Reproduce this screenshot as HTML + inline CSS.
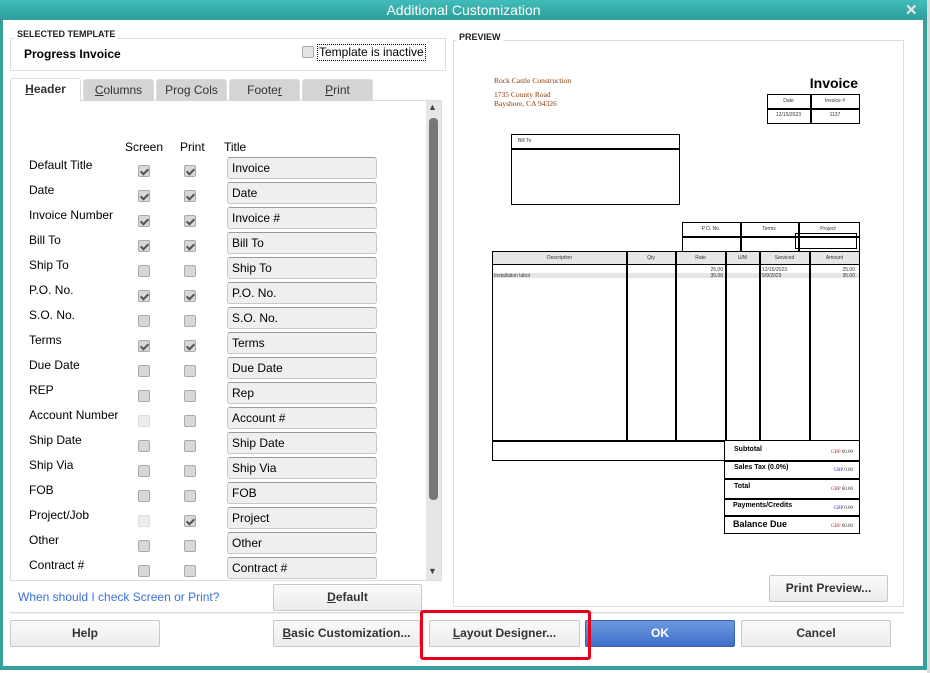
<!DOCTYPE html>
<html><head><meta charset="utf-8"><style>
*{box-sizing:border-box;margin:0;padding:0}
body{width:930px;height:673px;background:#fff;font-family:"Liberation Sans",Arial,sans-serif;font-size:12px;color:#000;position:relative;overflow:hidden}
.a{position:absolute}
.win{left:0;top:0;width:927px;height:670px;background:#399f9c;}
.title{left:0;top:0;width:927px;height:20px;background:linear-gradient(#41bcbb,#2e9e9b);color:#fff;font-size:14px;text-align:center;line-height:20px}
.client{left:3px;top:20px;width:920px;height:646px;background:#fff}
.lbl{font-size:12px;left:29px}
.cb{width:12px;height:12px;border:1px solid #aaa;border-radius:2px;background:#d8d8d8}
.cb.dis{background:#ececec;border-color:#ddd}
.cb.on::after{content:"";position:absolute;left:3px;top:1px;width:3px;height:6px;border:solid #555;border-width:0 2px 2px 0;transform:rotate(45deg)}
.fld{left:227px;width:150px;height:22px;border:1px solid #c8c8c8;border-top-color:#999;border-radius:3px;background:#efefef;padding-left:4px;line-height:20px;font-size:12px}
.btn{height:27px;border:1px solid #c8c8c8;border-radius:2px;background:linear-gradient(#fafafa,#ececec);text-align:center;line-height:25px;font-weight:bold;font-size:12px;color:#333}
.tab{top:79px;height:22px;background:#d4d4d4;border:1px solid #ddd;border-bottom:none;border-radius:3px 3px 0 0;text-align:center;line-height:21px;font-size:12px;color:#333}
.b{border:1.5px solid #000}
.s{font-size:5px;color:#333;text-align:center}
</style></head><body>
<div class="a" style="left:927px;top:0;width:3px;height:673px;background:#d8dcdc"></div>
<div class="a win"></div>
<div class="a title">Additional Customization</div>
<div class="a" style="left:905px;top:1px;color:#e8e8e8;font-size:15px;font-weight:bold">✕</div>
<div class="a client"></div>

<!-- selected template -->
<div class="a" style="left:10px;top:38px;width:436px;height:33px;border:1px solid #ddd"></div>
<div class="a" style="left:15px;top:29px;background:#fff;padding:0 2px;font-size:9px;font-weight:bold;color:#222">SELECTED TEMPLATE</div>
<div class="a" style="left:24px;top:47px;font-size:12px;font-weight:bold">Progress Invoice</div>
<div class="a cb" style="left:302px;top:46px;width:12px;height:12px;background:#e4e4e4"></div>
<div class="a" style="left:317px;top:44px;border:1px dotted #000;padding:0 1px;font-size:12px;line-height:15px">Template is inactive</div>

<!-- tabs -->
<div class="a" style="left:10px;top:100px;width:432px;height:481px;border:1px solid #ddd"></div>
<div class="a tab" style="left:10px;top:78px;width:71px;height:24px;background:#fff;font-weight:bold;"><u>H</u>eader</div>
<div class="a tab" style="left:83px;width:71px"><u>C</u>olumns</div>
<div class="a tab" style="left:156px;width:71px">Pro<u>g</u> Cols</div>
<div class="a tab" style="left:229px;width:71px">Foote<u>r</u></div>
<div class="a tab" style="left:302px;width:71px"><u>P</u>rint</div>
<div class="a" style="left:426px;top:101px;width:15px;height:479px;background:#e6e6e6"></div>
<div class="a" style="left:429px;top:118px;width:9px;height:382px;background:#777;border-radius:4px"></div>
<div class="a" style="left:428px;top:102px;font-size:9px;color:#444">▲</div>
<div class="a" style="left:428px;top:566px;font-size:9px;color:#444">▼</div>

<div class="a" style="left:125px;top:140px">Screen</div>
<div class="a" style="left:180px;top:140px">Print</div>
<div class="a" style="left:224px;top:140px">Title</div>

<div class="a lbl" style="top:158px">Default Title</div><div class="a cb on" style="left:138px;top:165px"></div><div class="a cb on" style="left:184px;top:165px"></div><div class="a fld" style="top:157px">Invoice</div>
<div class="a lbl" style="top:183px">Date</div><div class="a cb on" style="left:138px;top:190px"></div><div class="a cb on" style="left:184px;top:190px"></div><div class="a fld" style="top:182px">Date</div>
<div class="a lbl" style="top:208px">Invoice Number</div><div class="a cb on" style="left:138px;top:215px"></div><div class="a cb on" style="left:184px;top:215px"></div><div class="a fld" style="top:207px">Invoice #</div>
<div class="a lbl" style="top:233px">Bill To</div><div class="a cb on" style="left:138px;top:240px"></div><div class="a cb on" style="left:184px;top:240px"></div><div class="a fld" style="top:232px">Bill To</div>
<div class="a lbl" style="top:258px">Ship To</div><div class="a cb" style="left:138px;top:265px"></div><div class="a cb" style="left:184px;top:265px"></div><div class="a fld" style="top:257px">Ship To</div>
<div class="a lbl" style="top:283px">P.O. No.</div><div class="a cb on" style="left:138px;top:290px"></div><div class="a cb on" style="left:184px;top:290px"></div><div class="a fld" style="top:282px">P.O. No.</div>
<div class="a lbl" style="top:308px">S.O. No.</div><div class="a cb" style="left:138px;top:315px"></div><div class="a cb" style="left:184px;top:315px"></div><div class="a fld" style="top:307px">S.O. No.</div>
<div class="a lbl" style="top:333px">Terms</div><div class="a cb on" style="left:138px;top:340px"></div><div class="a cb on" style="left:184px;top:340px"></div><div class="a fld" style="top:332px">Terms</div>
<div class="a lbl" style="top:358px">Due Date</div><div class="a cb" style="left:138px;top:365px"></div><div class="a cb" style="left:184px;top:365px"></div><div class="a fld" style="top:357px">Due Date</div>
<div class="a lbl" style="top:383px">REP</div><div class="a cb" style="left:138px;top:390px"></div><div class="a cb" style="left:184px;top:390px"></div><div class="a fld" style="top:382px">Rep</div>
<div class="a lbl" style="top:408px">Account Number</div><div class="a cb dis" style="left:138px;top:415px"></div><div class="a cb" style="left:184px;top:415px"></div><div class="a fld" style="top:407px">Account #</div>
<div class="a lbl" style="top:433px">Ship Date</div><div class="a cb" style="left:138px;top:440px"></div><div class="a cb" style="left:184px;top:440px"></div><div class="a fld" style="top:432px">Ship Date</div>
<div class="a lbl" style="top:458px">Ship Via</div><div class="a cb" style="left:138px;top:465px"></div><div class="a cb" style="left:184px;top:465px"></div><div class="a fld" style="top:457px">Ship Via</div>
<div class="a lbl" style="top:483px">FOB</div><div class="a cb" style="left:138px;top:490px"></div><div class="a cb" style="left:184px;top:490px"></div><div class="a fld" style="top:482px">FOB</div>
<div class="a lbl" style="top:508px">Project/Job</div><div class="a cb dis" style="left:138px;top:515px"></div><div class="a cb on" style="left:184px;top:515px"></div><div class="a fld" style="top:507px">Project</div>
<div class="a lbl" style="top:533px">Other</div><div class="a cb" style="left:138px;top:540px"></div><div class="a cb" style="left:184px;top:540px"></div><div class="a fld" style="top:532px">Other</div>
<div class="a lbl" style="top:558px">Contract #</div><div class="a cb" style="left:138px;top:565px"></div><div class="a cb" style="left:184px;top:565px"></div><div class="a fld" style="top:557px">Contract #</div>

<div class="a" style="left:18px;top:590px;color:#3a6fd8">When should I check Screen or Print?</div>
<div class="a btn" style="left:273px;top:584px;width:149px"><u>D</u>efault</div>

<!-- preview -->
<div class="a" style="left:453px;top:40px;width:451px;height:567px;border:1px solid #ddd"></div>
<div class="a" style="left:457px;top:32px;background:#fff;padding:0 2px;font-size:9px;font-weight:bold;color:#222">PREVIEW</div>
<div class="a" style="left:494px;top:76px;font-family:'Liberation Serif',serif;font-size:7.5px;color:#8a3a00">Rock Castle Construction</div>
<div class="a" style="left:494px;top:90px;font-family:'Liberation Serif',serif;font-size:7.5px;line-height:9px;color:#8a3a00">1735 County Road<br>Bayshore, CA 94326</div>
<div class="a" style="left:800px;top:75px;width:58px;text-align:right;font-size:14px;font-weight:bold">Invoice</div>
<div class="a b" style="left:767px;top:94px;width:93px;height:30px"></div>
<div class="a" style="left:767px;top:108px;width:93px;height:1.5px;background:#000"></div>
<div class="a" style="left:810px;top:94px;width:1.5px;height:30px;background:#000"></div>
<div class="a s" style="left:767px;top:98px;width:43px">Date</div><div class="a s" style="left:811px;top:98px;width:48px">Invoice #</div>
<div class="a s" style="left:767px;top:112px;width:43px">12/15/2023</div><div class="a s" style="left:811px;top:112px;width:48px">1137</div>

<div class="a b" style="left:511px;top:134px;width:169px;height:71px"></div>
<div class="a" style="left:511px;top:148px;width:169px;height:1.5px;background:#000"></div>
<div class="a" style="left:518px;top:138px;font-size:5px;color:#333">Bill To</div>

<div class="a b" style="left:682px;top:222px;width:178px;height:30px"></div>
<div class="a" style="left:682px;top:236px;width:178px;height:1.5px;background:#000"></div>
<div class="a" style="left:740px;top:222px;width:1.5px;height:30px;background:#000"></div>
<div class="a" style="left:798px;top:222px;width:1.5px;height:30px;background:#000"></div>
<div class="a b" style="left:795px;top:233px;width:62px;height:16px"></div>
<div class="a s" style="left:682px;top:226px;width:58px">P.O. No.</div><div class="a s" style="left:740px;top:226px;width:58px">Terms</div><div class="a s" style="left:798px;top:226px;width:60px">Project</div>

<div class="a b" style="left:492px;top:251px;width:368px;height:210px"></div>
<div class="a" style="left:493px;top:252px;width:366px;height:13px;background:#e6e6e6;border-bottom:1.5px solid #000"></div>
<div class="a" style="left:493px;top:273px;width:366px;height:5px;background:#e6e6e6"></div>
<div class="a" style="left:626px;top:251px;width:1.5px;height:189px;background:#000"></div>
<div class="a" style="left:675px;top:251px;width:1.5px;height:189px;background:#000"></div>
<div class="a" style="left:725px;top:251px;width:1.5px;height:189px;background:#000"></div>
<div class="a" style="left:759px;top:251px;width:1.5px;height:189px;background:#000"></div>
<div class="a" style="left:809px;top:251px;width:1.5px;height:189px;background:#000"></div>
<div class="a" style="left:492px;top:440px;width:368px;height:1.5px;background:#000"></div>
<div class="a s" style="left:493px;top:255px;width:133px">Description</div><div class="a s" style="left:627px;top:255px;width:48px">Qty</div><div class="a s" style="left:676px;top:255px;width:49px">Rate</div><div class="a s" style="left:726px;top:255px;width:33px">U/M</div><div class="a s" style="left:760px;top:255px;width:49px">Serviced</div><div class="a s" style="left:810px;top:255px;width:49px">Amount</div>
<div class="a s" style="left:676px;top:267px;width:47px;text-align:right">25.00<br>35.00</div>
<div class="a s" style="left:762px;top:267px;text-align:left">12/15/2023<br>5/9/2023</div>
<div class="a s" style="left:810px;top:267px;width:45px;text-align:right">25.00<br>35.00</div>
<div class="a s" style="left:494px;top:273px;text-align:left">Installation labor</div>

<div class="a b" style="left:724px;top:440px;width:136px;height:94px;background:#fff"></div>
<div class="a" style="left:724px;top:460px;width:136px;height:1.5px;background:#000"></div>
<div class="a" style="left:724px;top:478px;width:136px;height:1.5px;background:#000"></div>
<div class="a" style="left:724px;top:498px;width:136px;height:1.5px;background:#000"></div>
<div class="a" style="left:724px;top:515px;width:136px;height:1.5px;background:#000"></div>
<div class="a" style="left:734px;top:446px;font-size:7px;font-weight:bold">Subtotal</div>
<div class="a" style="left:734px;top:464px;font-size:7px;font-weight:bold">Sales Tax  (0.0%)</div>
<div class="a" style="left:734px;top:483px;font-size:7px;font-weight:bold">Total</div>
<div class="a" style="left:733px;top:502px;font-size:7px;font-weight:bold">Payments/Credits</div>
<div class="a" style="left:733px;top:519px;font-size:9px;font-weight:bold">Balance Due</div>
<div class="a s" style="left:815px;top:450px;width:38px;text-align:right;font-family:'Liberation Serif',serif"><span style="color:#a33">GBP</span> 60.00</div>
<div class="a s" style="left:815px;top:468px;width:38px;text-align:right;font-family:'Liberation Serif',serif"><span style="color:#33a">GBP</span> 0.00</div>
<div class="a s" style="left:815px;top:487px;width:38px;text-align:right;font-family:'Liberation Serif',serif"><span style="color:#a33">GBP</span> 60.00</div>
<div class="a s" style="left:815px;top:506px;width:38px;text-align:right;font-family:'Liberation Serif',serif"><span style="color:#33a">GBP</span> 0.00</div>
<div class="a s" style="left:815px;top:524px;width:38px;text-align:right;font-family:'Liberation Serif',serif"><span style="color:#a33">GBP</span> 60.00</div>

<div class="a btn" style="left:769px;top:575px;width:119px">Print Preview...</div>

<div class="a" style="left:10px;top:612px;width:894px;height:2px;border-top:1px solid #ddd;border-bottom:1px solid #eee"></div>
<div class="a btn" style="left:10px;top:620px;width:150px">Help</div>
<div class="a btn" style="left:273px;top:620px;width:147px"><u>B</u>asic Customization...</div>
<div class="a btn" style="left:429px;top:620px;width:151px"><u>L</u>ayout Designer...</div>
<div class="a btn" style="left:585px;top:620px;width:150px;background:linear-gradient(#6c9ae0,#3f6fc9);border-color:#3a62b0;color:#fff">OK</div>
<div class="a btn" style="left:741px;top:620px;width:150px">Cancel</div>
<div class="a" style="left:420px;top:610px;width:171px;height:50px;border:3px solid #e8001a;border-radius:3px"></div>
</body></html>
